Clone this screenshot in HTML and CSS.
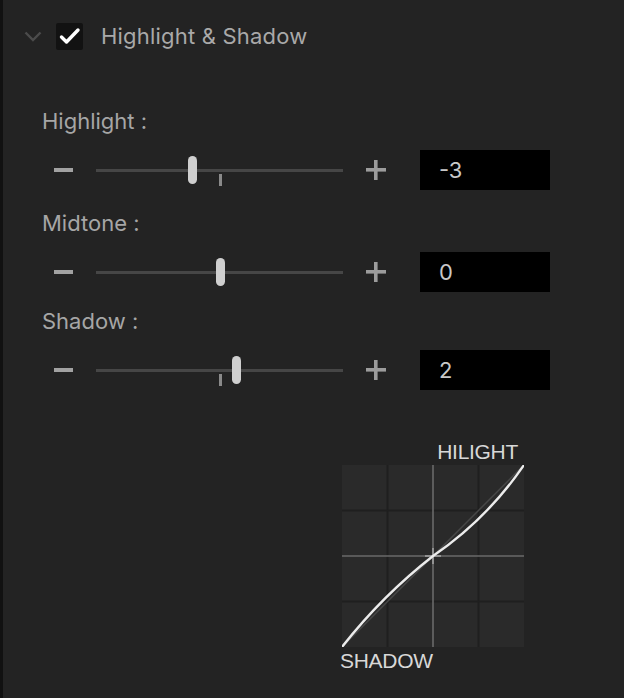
FILE: index.html
```html
<!DOCTYPE html>
<html>
<head>
<meta charset="utf-8">
<link rel="stylesheet" href="styles.css">
</head>
<body>
<div class="panel">
  <div class="header">
    <svg class="chevron" width="18" height="12" viewBox="0 0 18 12"><path d="M1.5 1.5 L9 9 L16.5 1.5" fill="none" stroke="#4b4b4b" stroke-width="2.4"/></svg>
    <span class="checkbox">
      <svg width="27" height="27" viewBox="0 0 27 27"><path d="M5.5 14 L10.5 19 L22 7" fill="none" stroke="#fff" stroke-width="3.4" stroke-linecap="round" stroke-linejoin="round"/></svg>
    </span>
    <span class="title">Highlight &amp; Shadow</span>
  </div>

  <div class="content">
    <div class="group">
      <div class="label">Highlight :</div>
      <div class="row">
        <span class="minus"></span>
        <div class="slider">
          <span class="track"></span>
          <span class="tick"></span>
          <span class="thumb" style="left:96px"></span>
        </div>
        <span class="plus"></span>
        <div class="value">-3</div>
      </div>
    </div>

    <div class="group">
      <div class="label">Midtone :</div>
      <div class="row">
        <span class="minus"></span>
        <div class="slider">
          <span class="track"></span>
          <span class="thumb" style="left:124px"></span>
        </div>
        <span class="plus"></span>
        <div class="value">0</div>
      </div>
    </div>

    <div class="group">
      <div class="label">Shadow :</div>
      <div class="row">
        <span class="minus"></span>
        <div class="slider">
          <span class="track"></span>
          <span class="tick"></span>
          <span class="thumb" style="left:140px"></span>
        </div>
        <span class="plus"></span>
        <div class="value">2</div>
      </div>
    </div>

    <div class="graph">
      <div class="graph-label graph-label--top">HILIGHT</div>
      <svg class="curve" width="182" height="182" viewBox="0 0 182 182">
        <rect x="0" y="0" width="182" height="182" fill="#2a2a2a"/>
        <g stroke="#1f1f1f" stroke-width="2">
          <line x1="45.5" y1="0" x2="45.5" y2="182"/>
          <line x1="136.5" y1="0" x2="136.5" y2="182"/>
          <line x1="0" y1="45.5" x2="182" y2="45.5"/>
          <line x1="0" y1="136.5" x2="182" y2="136.5"/>
        </g>
        <g stroke="#6a6a6a" stroke-width="1.6">
          <line x1="91" y1="0" x2="91" y2="182"/>
          <line x1="0" y1="91" x2="182" y2="91"/>
        </g>
        <line x1="0" y1="182" x2="182" y2="0" stroke="#474747" stroke-width="1.5"/>
        <g stroke="#a0a0a0" stroke-width="1.6">
          <line x1="83" y1="91" x2="99" y2="91"/>
          <line x1="91" y1="83" x2="91" y2="99"/>
        </g>
        <path d="M0 182 Q40 131 91 91 Q145 54 182 0" fill="none" stroke="#ececec" stroke-width="2.4"/>
      </svg>
      <div class="graph-label graph-label--bottom">SHADOW</div>
    </div>
  </div>
</div>
</body>
</html>
```

FILE: styles.css
```css
html, body {
  margin: 0;
  padding: 0;
  background: #232323;
}

.panel {
  width: 621px;
  height: 698px;
  border-left: 3px solid #111111;
  background: #232323;
  font-family: Inter, "Liberation Sans", sans-serif;
  overflow: hidden;
}

.header {
  height: 72px;
  display: flex;
  align-items: center;
  padding-left: 21px;
}

.chevron {
  display: block;
  margin-top: 1px;
}

.checkbox {
  width: 27px;
  height: 27px;
  margin-left: 14px;
  background: #121212;
  border-radius: 2px;
  display: block;
}

.checkbox svg {
  display: block;
}

.title {
  margin-left: 18px;
  font-size: 22px;
  color: #a9a9a9;
  letter-spacing: 0.2px;
}

.content {
  padding-top: 37px;
  padding-left: 39px;
}

.group:nth-child(2) {
  margin-top: 21px;
}

.group:nth-child(3) {
  margin-top: 17px;
}

.label {
  font-size: 22px;
  line-height: 24px;
  color: #a6a6a6;
}

.row {
  margin-top: 17px;
  height: 40px;
  display: flex;
  align-items: center;
  padding-left: 12px;
}

.minus {
  width: 19px;
  height: 3.5px;
  background: #a2a2a2;
  display: block;
}

.slider {
  margin-left: 23px;
  width: 247px;
  height: 40px;
  position: relative;
}

.track {
  position: absolute;
  left: 0;
  right: 0;
  top: 18.5px;
  height: 3px;
  background: #464646;
}

.tick {
  position: absolute;
  left: 122.5px;
  top: 24px;
  width: 3px;
  height: 12px;
  background: #8a8a8a;
}

.thumb {
  position: absolute;
  top: 6px;
  width: 9px;
  height: 28px;
  margin-left: -4.5px;
  border-radius: 4.5px;
  background: #cfcfcf;
}

.plus {
  margin-left: 23px;
  width: 20px;
  height: 20px;
  position: relative;
  display: block;
  background:
    linear-gradient(#9c9c9c, #9c9c9c) center / 20px 3.6px no-repeat,
    linear-gradient(#9c9c9c, #9c9c9c) center / 3.6px 20px no-repeat;
}

.value {
  margin-left: 34px;
  width: 111px;
  height: 40px;
  padding-left: 19px;
  background: #000;
  color: #c8c8c8;
  font-size: 22px;
  line-height: 40px;
}

.graph {
  margin-top: 51px;
  margin-left: 300px;
  width: 182px;
  display: flex;
  flex-direction: column;
}

.curve {
  display: block;
}

.graph-label {
  font-family: "Liberation Sans", Arial, sans-serif;
  font-size: 21px;
  line-height: 22px;
  color: #d8d8d8;
  letter-spacing: -0.3px;
}

.graph-label--top {
  text-align: right;
  padding-right: 6px;
  margin-bottom: 2px;
}

.graph-label--bottom {
  margin-left: -2px;
  margin-top: 3px;
}
```
